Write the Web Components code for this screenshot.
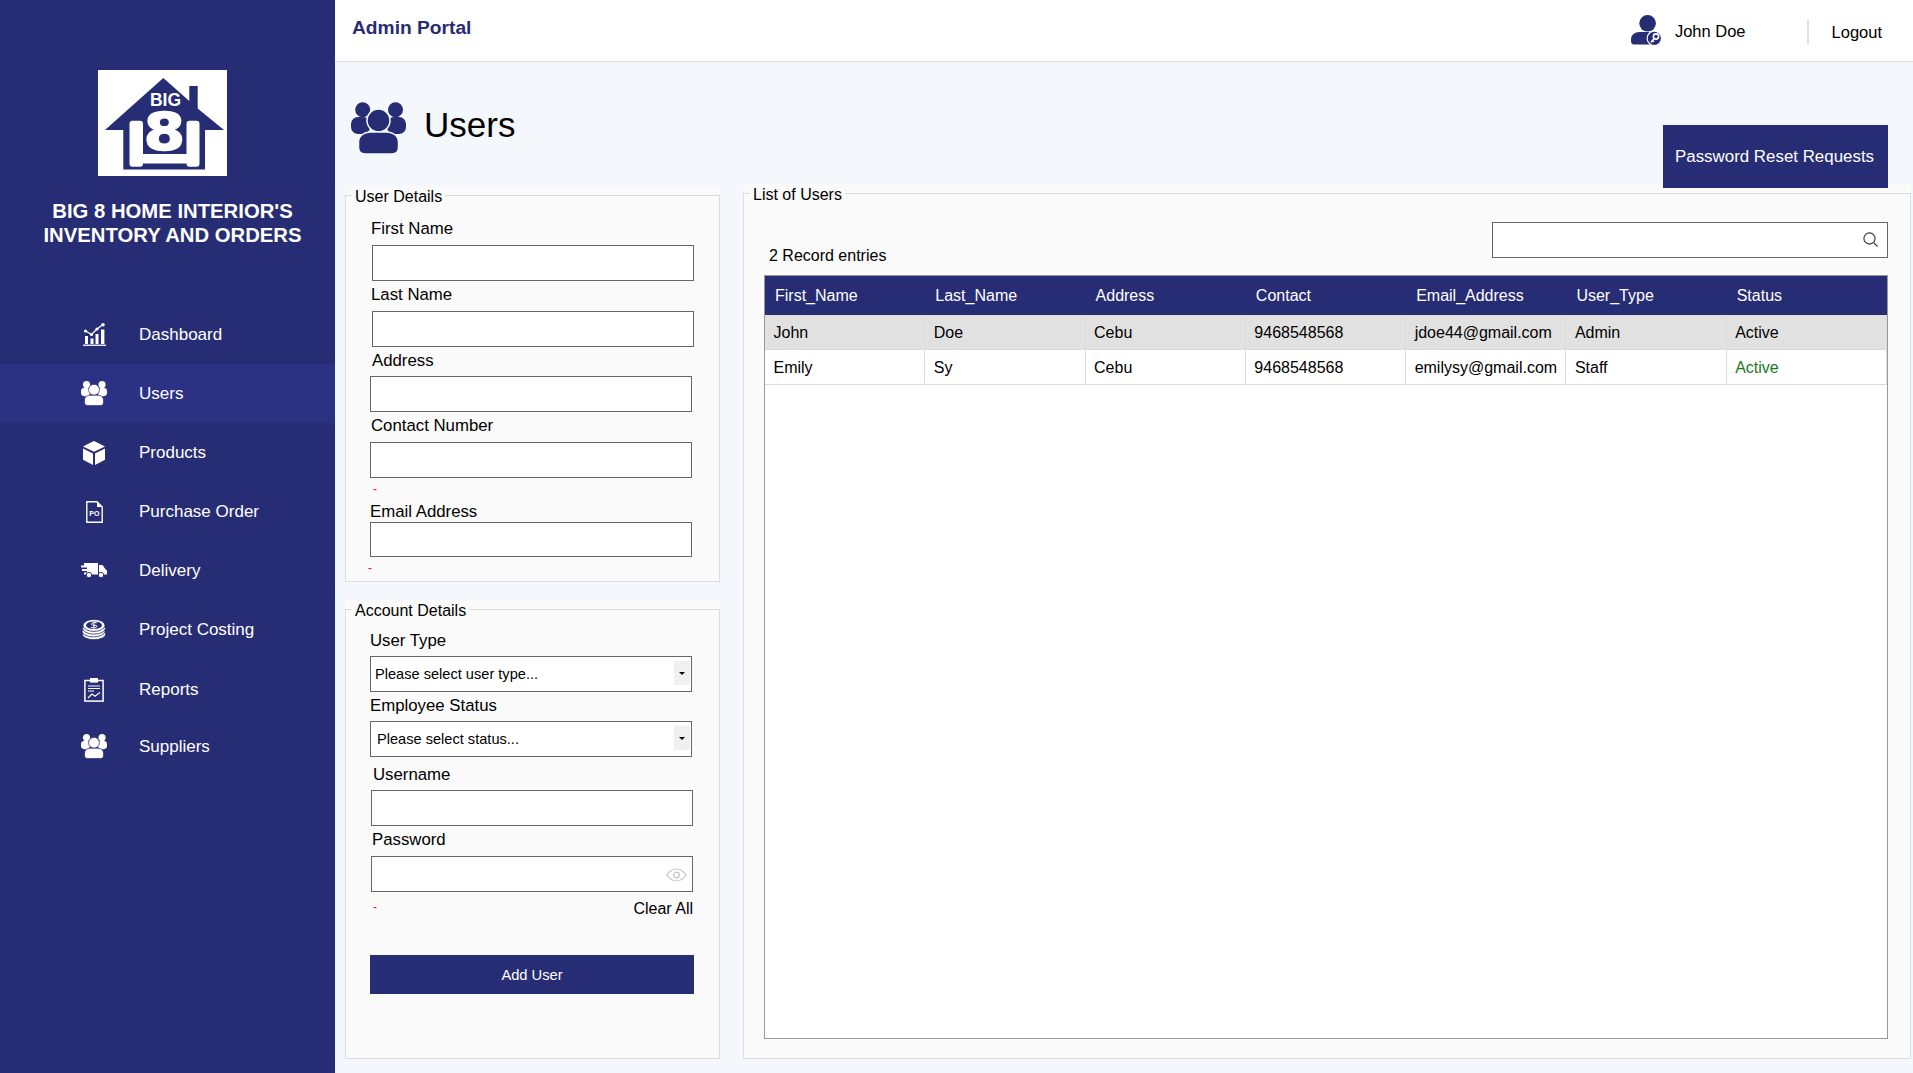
<!DOCTYPE html>
<html lang="en">
<head>
<meta charset="utf-8">
<title>Users</title>
<style>
  html, body { margin: 0; height: 100%; }
  body { font-family: "Liberation Sans", Arial, sans-serif; color: #000; overflow: hidden; }
</style>
</head>
<body>
<app-shell>
  <side-nav slot="side">
    <nav-item icon="dashboard">Dashboard</nav-item>
    <nav-item icon="group" active>Users</nav-item>
    <nav-item icon="box">Products</nav-item>
    <nav-item icon="po">Purchase Order</nav-item>
    <nav-item icon="truck">Delivery</nav-item>
    <nav-item icon="coins">Project Costing</nav-item>
    <nav-item icon="report" style="margin-top:1px">Reports</nav-item>
    <nav-item icon="group" style="margin-top:-2px">Suppliers</nav-item>
  </side-nav>
  <top-bar slot="top"></top-bar>
  <page-title></page-title>
  <div style="display:flex;gap:23px;padding:0 2px 0 10px;height:889px;box-sizing:border-box">
    <div style="width:375px;padding-top:2px">
      <form-panel legend="User Details" style="height:396px">
        <form-field label="First Name" inset="26" label-inset="25" gap="7" style="margin-top:15px"></form-field>
        <form-field label="Last Name" inset="26" label-inset="25" gap="7" style="margin-top:4px"></form-field>
        <form-field label="Address" inset="24" label-inset="26" gap="6" style="margin-top:4px"></form-field>
        <form-field label="Contact Number" inset="24" label-inset="25" gap="7" style="margin-top:4px"></form-field>
        <field-note style="margin:5px 0 0 27px">-</field-note>
        <form-field label="Email Address" inset="24" label-inset="24" gap="1" height="35" style="margin-top:6px"></form-field>
        <field-note style="margin:5px 0 0 22px">-</field-note>
      </form-panel>
      <form-panel legend="Account Details" style="height:459px;margin-top:18px">
        <form-field label="User Type" kind="select" placeholder="Please select user type..." text-inset="4" inset="24" label-inset="24" gap="6" style="margin-top:13px"></form-field>
        <form-field label="Employee Status" kind="select" placeholder="Please select status..." text-inset="6" inset="24" label-inset="24" gap="6" style="margin-top:4px"></form-field>
        <form-field label="Username" inset="25" label-inset="27" gap="6" style="margin-top:8px"></form-field>
        <form-field label="Password" kind="password" inset="25" label-inset="26" gap="7" style="margin-top:4px"></form-field>
        <form-actions></form-actions>
      </form-panel>
    </div>
    <div style="width:1168px">
      <form-panel legend="List of Users" style="height:875px">
        <table-toolbar></table-toolbar>
        <users-table></users-table>
      </form-panel>
    </div>
  </div>
</app-shell>

<script>
const NAVY = '#272d75';

// Shared icons, all drawn with currentColor; --gap is the colour behind them
const ICONS = {
  group: `<svg viewBox="0 0 55 52" width="26" height="24.6">
      <circle cx="11.7" cy="7.7" r="7.5" fill="currentColor"/>
      <circle cx="44.5" cy="7.7" r="7.5" fill="currentColor"/>
      <rect x="0" y="15" width="19" height="17" rx="7" fill="currentColor"/>
      <rect x="36" y="15" width="19" height="17" rx="7" fill="currentColor"/>
      <circle cx="27.5" cy="18.5" r="11.5" fill="currentColor" stroke="var(--gap)" stroke-width="1.5"/>
      <path d="M7.5 45V40C7.5 34 13 30 19 30H36C42 30 47.5 34 47.5 40V45C47.5 49.5 45 52 41 52H14C10 52 7.5 49.5 7.5 45Z" fill="currentColor" stroke="var(--gap)" stroke-width="1.5"/>
    </svg>`,
  dashboard: `<svg viewBox="0 0 23 23" width="23" height="23" fill="currentColor">
      <rect x="0" y="21.6" width="23" height="1.3"/>
      <rect x="2" y="13" width="3" height="8"/><rect x="7.5" y="15.5" width="3" height="5.5"/>
      <rect x="12.5" y="11" width="3" height="10"/><rect x="18" y="6.5" width="3.4" height="14.5"/>
      <path d="M2.5 8L8.5 11.5L14 6L20 1.5" fill="none" stroke="currentColor" stroke-width="1.2"/>
      <circle cx="2.5" cy="8" r="1.6"/><circle cx="8.5" cy="11.5" r="1.6"/><circle cx="14" cy="6" r="1.6"/><circle cx="20" cy="1.8" r="1.8"/>
    </svg>`,
  box: `<svg viewBox="0 0 22 24" width="22" height="24" fill="currentColor">
      <path d="M11 0L22 5.5L11 10.7L0 5.5Z"/><path d="M0 7.5L10 12.5V24L0 18.7Z"/><path d="M12 12.5L22 7.5V18.7L12 24Z"/>
    </svg>`,
  po: `<svg viewBox="0 0 17 22" width="17" height="22">
      <path d="M.8.8H11L16.2 6V21.2H.8Z" fill="none" stroke="currentColor" stroke-width="1.4"/>
      <path d="M11 .8L16.2 6H11Z" fill="currentColor"/>
      <text x="8.4" y="15" text-anchor="middle" font-size="7" font-weight="700" fill="currentColor">PO</text>
    </svg>`,
  truck: `<svg viewBox="0 0 26 15" width="26" height="15" fill="currentColor">
      <path d="M3 0H17V11.5H3V9.5H6V8H1V6H6V4.5H0V2.5H3Z"/>
      <path d="M18 2H21.5L24.5 6.2L26 7.5V11.5H18Z"/>
      <circle cx="8" cy="12" r="2.7" stroke="var(--gap)" stroke-width=".9"/>
      <circle cx="20" cy="12" r="2.7" stroke="var(--gap)" stroke-width=".9"/>
    </svg>`,
  coins: `<svg viewBox="0 0 24 21" width="24" height="21" fill="currentColor" stroke="var(--gap)" stroke-width=".8">
      <ellipse cx="12" cy="15" rx="11.7" ry="5.7"/>
      <ellipse cx="11.5" cy="12.2" rx="11.4" ry="5.7"/>
      <ellipse cx="12" cy="9.4" rx="11.4" ry="5.7"/>
      <ellipse cx="12" cy="6.4" rx="11" ry="6"/>
      <ellipse cx="12" cy="6.2" rx="8" ry="3.8" fill="var(--gap)" stroke="none"/>
      <path d="M15 3.8C12 3.2 8.5 3.8 9.5 5.5C10.5 7 14.5 5.5 15 7.2C15.4 8.8 11.5 9 8.8 8.4M12 2.6V9.8" fill="none" stroke="currentColor" stroke-width="1"/>
    </svg>`,
  report: `<svg viewBox="0 0 20 24" width="20" height="24">
      <rect x=".9" y="2.5" width="18.2" height="20.6" fill="none" stroke="currentColor" stroke-width="1.5"/>
      <rect x="6" y="0" width="8" height="4.6" fill="currentColor"/>
      <path d="M4 8H16M4 10.5H16M4 13H10" stroke="currentColor" stroke-width="1"/>
      <path d="M4 20L8 16L11 18.2L16 14.5" fill="none" stroke="currentColor" stroke-width="1.1"/>
    </svg>`
};

class AppShell extends HTMLElement {
  constructor() {
    super();
    this.attachShadow({mode: 'open'});
    this.shadowRoot.innerHTML = `
      <style>
        :host { display: grid; grid-template-columns: 335px 1fr; height: 1073px; background: #f4f7fc; }
        main { min-width: 0; }
      </style>
      <slot name="side"></slot>
      <main><slot name="top"></slot><slot></slot></main>`;
  }
}

class SideNav extends HTMLElement {
  constructor() {
    super();
    this.attachShadow({mode: 'open'});
    this.shadowRoot.innerHTML = `
      <style>
        :host { display: block; background: ${NAVY}; color: #fff; }
        .logo { display: block; margin: 0 0 0 98px; }
        .top { height: 70px; }
        h1 {
          margin: 23px 0 58px; padding-left: 10px; text-align: center;
          font-size: 20.3px; line-height: 24px; font-weight: 700;
        }
      </style>
      <div class="top"></div>
      <svg class="logo" viewBox="0 0 129 106" width="129" height="106">
        <rect width="129" height="106" fill="#fff"/>
        <path d="M65.3 8L91.3 31V16H99.7V38.5L126 60H107V99.5H25.3V60H7Z" fill="${NAVY}"/>
        <rect x="31.5" y="50.7" width="13.5" height="46" rx="3" fill="#fff"/>
        <rect x="88.5" y="50.7" width="13" height="46" rx="3" fill="#fff"/>
        <rect x="40" y="84" width="54" height="9.5" fill="#fff"/>
        <text x="0" y="0" transform="translate(66.3 79.6) scale(1.14 1)" text-anchor="middle" font-family="DejaVu Sans" font-weight="700" font-size="52" fill="#fff" stroke="#fff" stroke-width="1.6">8</text>
        <text x="52" y="36.2" textLength="31" lengthAdjust="spacingAndGlyphs" font-weight="700" font-size="18.5" fill="#fff">BIG</text>
      </svg>
      <h1>BIG 8 HOME INTERIOR'S<br>INVENTORY AND ORDERS</h1>
      <slot></slot>`;
  }
}

class NavItem extends HTMLElement {
  constructor() {
    super();
    this.attachShadow({mode: 'open'});
    const active = this.hasAttribute('active');
    this.shadowRoot.innerHTML = `
      <style>
        :host {
          display: flex; align-items: center; height: 59px; box-sizing: border-box;
          padding-left: 79px; font-size: 17px;
          --gap: ${active ? '#2b3284' : NAVY};
          background: ${active ? '#2b3284' : 'transparent'};
        }
        .icon { width: 30px; display: flex; justify-content: center; margin-right: 30px; }
        svg { display: block; }
      </style>
      <span class="icon">${ICONS[this.getAttribute('icon')]}</span>
      <slot></slot>`;
  }
}

class TopBar extends HTMLElement {
  constructor() {
    super();
    this.attachShadow({mode: 'open'});
    this.shadowRoot.innerHTML = `
      <style>
        :host {
          display: flex; align-items: flex-start; height: 62px; box-sizing: border-box;
          background: #fff; border-bottom: 1px solid #e2e2e2; padding: 0 31px 0 17px; font-size: 16.5px;
        }
        .brand { margin: 17px auto 0 0; color: ${NAVY}; font-size: 19.2px; line-height: 22px; font-weight: 700; }
        svg { margin: 15px 13px 0 0; display: block; color: ${NAVY}; }
        .name { margin-top: 22px; line-height: 19px; }
        .sep { width: 2px; height: 24px; margin: 20px 23px 0 61px; background: #e2e2e2; }
        .logout { margin-top: 23px; line-height: 19px; }
      </style>
      <div class="brand">Admin Portal</div>
      <svg viewBox="0 0 31 31" width="31" height="31">
        <circle cx="16.6" cy="8.3" r="8.3" fill="currentColor"/>
        <path d="M0 26V24C0 20 4 17 8 17H22C26 17 28 20 28 23V29.5H3C1 29.5 0 28 0 26Z" fill="currentColor"/>
        <circle cx="23.3" cy="23.3" r="7.2" fill="currentColor" stroke="#fff" stroke-width="1.2"/>
        <circle cx="25" cy="21.5" r="2.6" fill="none" stroke="#fff" stroke-width="1.6"/>
        <path d="M23.4 23.2L19.8 27.4M21.5 25.4L23 26.8" fill="none" stroke="#fff" stroke-width="1.5"/>
      </svg>
      <div class="name">John Doe</div>
      <div class="sep"></div>
      <div class="logout">Logout</div>`;
  }
}

class PageTitle extends HTMLElement {
  constructor() {
    super();
    this.attachShadow({mode: 'open'});
    this.shadowRoot.innerHTML = `
      <style>
        :host {
          display: flex; align-items: flex-start; height: 122px; box-sizing: border-box;
          padding: 40px 25px 0 16px; position: relative; z-index: 1; --gap: #f4f7fc;
        }
        svg { display: block; color: ${NAVY}; width: 55px; height: 52px; margin-right: 18px; }
        h2 { margin: 3px auto 0 0; font-size: 35px; line-height: 40px; font-weight: 400; }
        button {
          width: 225px; height: 63px; margin-top: 23px; padding: 0 0 0 12px; border: 0; text-align: left;
          background: ${NAVY}; color: #fff; font: inherit; font-size: 16.9px;
        }
      </style>
      ${ICONS.group}
      <h2>Users</h2>
      <button type="button">Password Reset Requests</button>`;
  }
}

class FormPanel extends HTMLElement {
  constructor() {
    super();
    this.attachShadow({mode: 'open'});
    this.shadowRoot.innerHTML = `
      <style>
        :host { display: flex; background: #fafafa; box-sizing: border-box; font-size: 16px; }
        fieldset {
          flex: 1; min-width: 0; margin: 0; padding: 0; border: 1px solid #dcdcdc;
          display: flex; flex-direction: column;
        }
        legend { margin-left: 6px; padding: 0 3px; line-height: 18px; }
        legend span { position: relative; top: 2px; }
      </style>
      <fieldset>
        <legend><span>${this.getAttribute('legend')}</span></legend>
        <slot style="display:contents"></slot>
      </fieldset>`;
  }
}

class FormField extends HTMLElement {
  constructor() {
    super();
    this.attachShadow({mode: 'open'});
    const kind = this.getAttribute('kind') || 'text';
    let control = `<input type="${kind}">`;
    if (kind === 'select') {
      control = `
        <select style="padding-left:${this.getAttribute('text-inset')}px">
          <option>${this.getAttribute('placeholder')}</option>
        </select>
        <span class="arrow"><i></i></span>`;
    }
    if (kind === 'password') {
      control += `
        <svg class="eye" viewBox="0 0 21 14" width="21" height="14" fill="none" stroke="#c4c4c4" stroke-width="1.2">
          <path d="M.8 7C4 2.8 7 1 10.5 1S17 2.8 20.2 7C17 11.2 14 13 10.5 13S4 11.2 .8 7Z"/>
          <circle cx="10.5" cy="7" r="2.8"/>
        </svg>`;
    }
    this.shadowRoot.innerHTML = `
      <style>
        :host { display: block; }
        label {
          display: block; margin-left: ${this.getAttribute('label-inset')}px;
          margin-bottom: ${this.getAttribute('gap')}px; font-size: 16.8px; line-height: 19px;
        }
        .box {
          position: relative; width: 322px; height: ${this.getAttribute('height') || 36}px;
          margin-left: ${this.getAttribute('inset')}px;
        }
        input, select {
          display: block; width: 100%; height: 100%; box-sizing: border-box; margin: 0;
          border: 1px solid #666; border-radius: 0; background: #fff; outline: 0; color: #000;
          font: inherit; font-size: 14.6px; appearance: none;
        }
        select { padding-bottom: 1px; }
        .arrow {
          position: absolute; right: 2px; top: 5px; width: 16px; height: 24px; background: #f0f0f0;
          display: flex; align-items: center; justify-content: center;
        }
        .arrow i { border: 3px solid transparent; border-top: 3.5px solid #000; border-bottom: 0; }
        .eye { position: absolute; right: 6px; top: 12px; }
      </style>
      <label>${this.getAttribute('label')}</label>
      <div class="box">${control}</div>`;
  }
}

class FieldNote extends HTMLElement {
  constructor() {
    super();
    this.attachShadow({mode: 'open'});
    this.shadowRoot.innerHTML = `
      <style>:host { display: block; color: #f00; font-size: 12px; line-height: 13px; }</style>
      <slot></slot>`;
  }
}

class FormActions extends HTMLElement {
  constructor() {
    super();
    this.attachShadow({mode: 'open'});
    this.shadowRoot.innerHTML = `
      <style>
        :host { display: block; }
        .row { display: flex; justify-content: space-between; align-items: flex-start; width: 322px; margin: 8px 0 37px 25px; }
        .dash { margin: 1px 0 0 2px; color: #f00; font-size: 12px; line-height: 13px; }
        .clear { line-height: 18px; }
        button {
          display: block; width: 324px; height: 39px; margin-left: 24px; border: 0;
          background: ${NAVY}; color: #fff; font: inherit; font-size: 14.7px;
        }
      </style>
      <div class="row"><span class="dash">-</span><span class="clear">Clear All</span></div>
      <button type="button">Add User</button>`;
  }
}

class TableToolbar extends HTMLElement {
  constructor() {
    super();
    this.attachShadow({mode: 'open'});
    this.shadowRoot.innerHTML = `
      <style>
        :host {
          display: flex; justify-content: space-between; align-items: flex-end;
          margin: 20px 22px 0 25px;
        }
        .count { line-height: 18px; }
        .search { position: relative; width: 396px; height: 36px; margin-bottom: 7px; }
        input { display: block; width: 100%; height: 100%; box-sizing: border-box; margin: 0; border: 1px solid #666; background: #fff; border-radius: 0; outline: 0; }
        svg { position: absolute; right: 10px; top: 10px; }
      </style>
      <div class="count">2 Record entries</div>
      <div class="search">
        <input type="text">
        <svg viewBox="0 0 15 15" width="15" height="15" fill="none" stroke="#333" stroke-width="1.1">
          <circle cx="6.5" cy="6.5" r="5.6"/><path d="M10.6 10.6L14.5 14.5"/>
        </svg>
      </div>`;
  }
}

class UsersTable extends HTMLElement {
  constructor() {
    super();
    this.attachShadow({mode: 'open'});
    const heads = ['First_Name', 'Last_Name', 'Address', 'Contact', 'Email_Address', 'User_Type', 'Status'];
    const rows = [
      ['John', 'Doe', 'Cebu', '9468548568', 'jdoe44@gmail.com', 'Admin', 'Active'],
      ['Emily', 'Sy', 'Cebu', '9468548568', 'emilysy@gmail.com', 'Staff', 'Active'],
    ];
    const body = rows.map(row => `<tr>${row.map(c => `<td>${c}</td>`).join('')}</tr>`).join('');
    this.shadowRoot.innerHTML = `
      <style>
        :host {
          display: block; flex: 1; min-height: 0; margin: 10px 22px 19px 20px;
          border: 1px solid #999; background: #fff;
        }
        table { width: 100%; table-layout: fixed; border-collapse: separate; border-spacing: 0; font-size: 16px; }
        th { height: 39px; padding: 0 0 0 10px; background: ${NAVY}; color: #fff; font-weight: 400; text-align: left; }
        td { height: 32px; padding: 2px 0 0 8.5px; border-right: 1px solid #dcdcdc; border-bottom: 1px solid #dcdcdc; white-space: nowrap; }
        tr:first-child td { background: #e1e1e1; }
        tr:last-child td:last-child { color: #1b7a1b; }
      </style>
      <table>
        <thead><tr>${heads.map(h => `<th>${h}</th>`).join('')}</tr></thead>
        <tbody>${body}</tbody>
      </table>`;
  }
}

customElements.define('app-shell', AppShell);
customElements.define('side-nav', SideNav);
customElements.define('nav-item', NavItem);
customElements.define('top-bar', TopBar);
customElements.define('page-title', PageTitle);
customElements.define('form-panel', FormPanel);
customElements.define('form-field', FormField);
customElements.define('field-note', FieldNote);
customElements.define('form-actions', FormActions);
customElements.define('table-toolbar', TableToolbar);
customElements.define('users-table', UsersTable);
</script>
</body>
</html>
